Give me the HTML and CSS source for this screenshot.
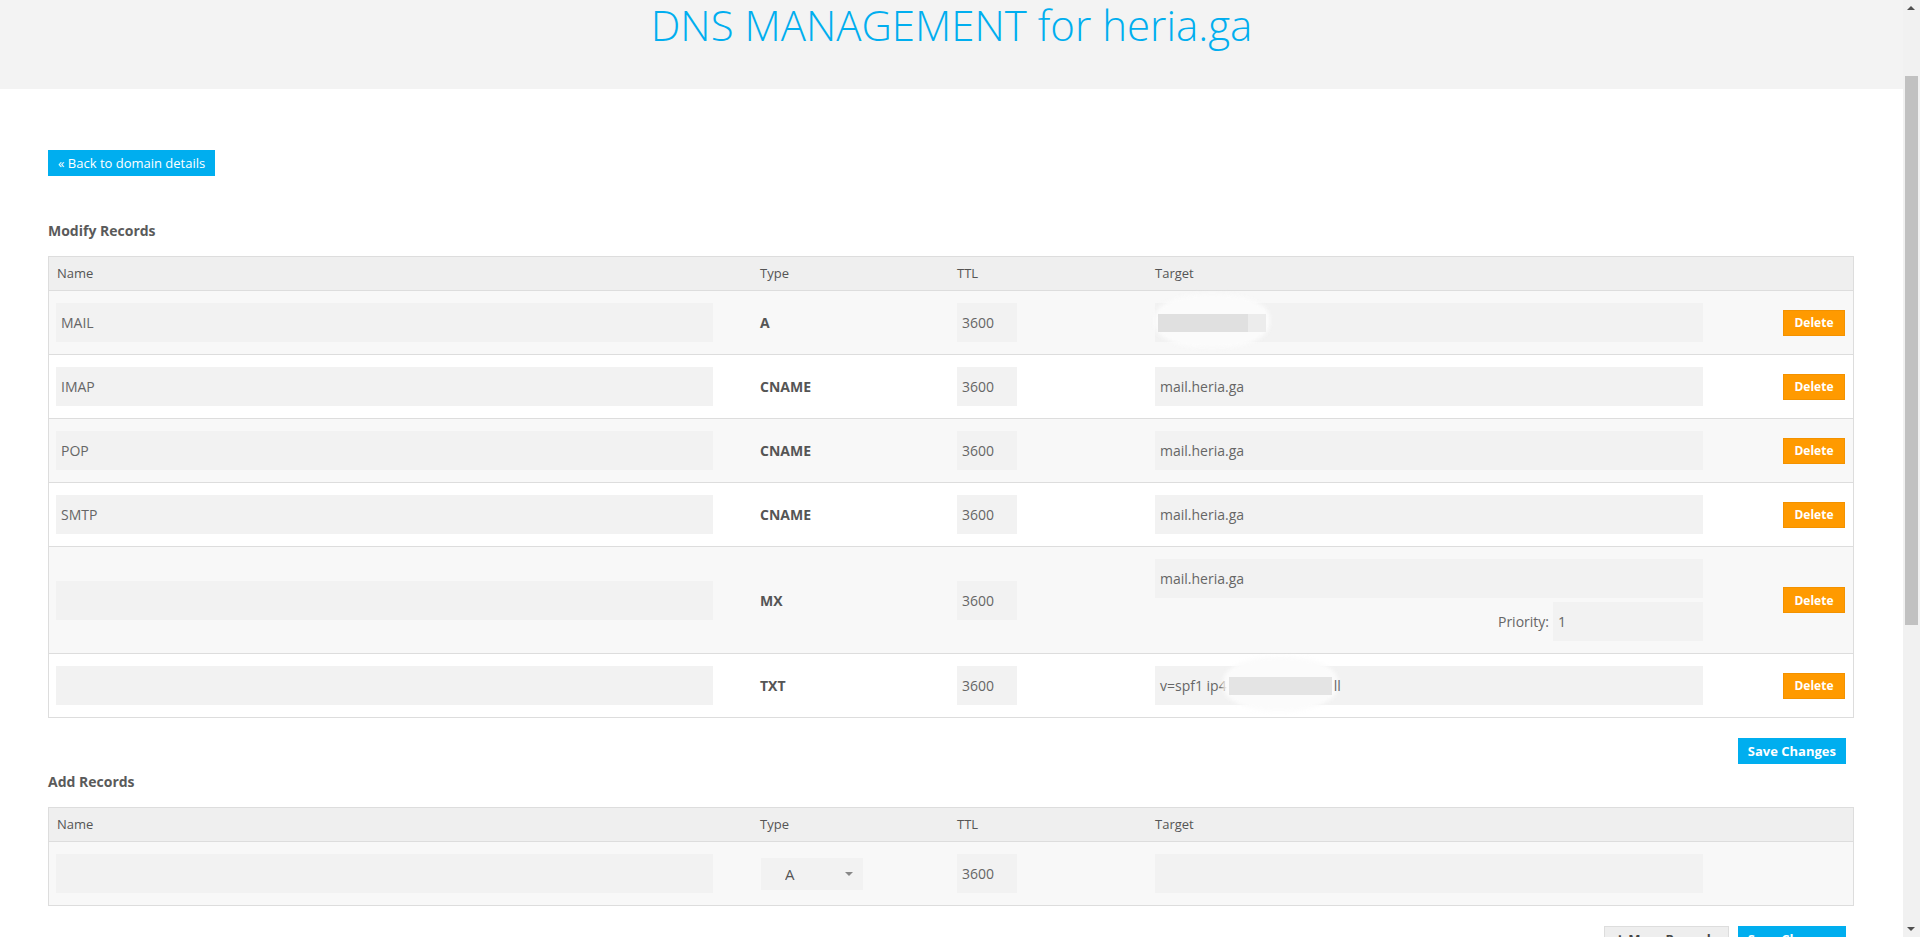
FILE: index.html
```html
<!DOCTYPE html>
<html lang="en">
<head>
<meta charset="utf-8">
<title>DNS Management</title>
<link rel="stylesheet" href="styles.css">
</head>
<body>
<div class="page">
<header class="page-head">
  <h1 class="page-title">DNS MANAGEMENT for heria.ga</h1>
</header>
<main class="content">
  <div class="back-row"><a class="btn btn-blue" href="#">&laquo; Back to domain details</a></div>

  <h2 class="section-title">Modify Records</h2>
  <div class="dns-table">
    <div class="dns-row dns-head">
      <div class="cell cell-name">Name</div>
      <div class="cell">Type</div>
      <div class="cell">TTL</div>
      <div class="cell">Target</div>
      <div class="cell"></div>
    </div>

    <div class="dns-row alt">
      <div class="cell cell-name"><input class="field f-name" value="MAIL"></div>
      <div class="cell type">A</div>
      <div class="cell"><input class="field f-ttl" value="3600"></div>
      <div class="cell"><div class="field f-target"><span class="smudge smudge-ip"><span class="smudge-bar"></span><span class="smudge-tail"></span></span></div></div>
      <div class="cell action"><button class="btn btn-orange">Delete</button></div>
    </div>

    <div class="dns-row">
      <div class="cell cell-name"><input class="field f-name" value="IMAP"></div>
      <div class="cell type">CNAME</div>
      <div class="cell"><input class="field f-ttl" value="3600"></div>
      <div class="cell"><input class="field f-target" value="mail.heria.ga"></div>
      <div class="cell action"><button class="btn btn-orange">Delete</button></div>
    </div>

    <div class="dns-row alt">
      <div class="cell cell-name"><input class="field f-name" value="POP"></div>
      <div class="cell type">CNAME</div>
      <div class="cell"><input class="field f-ttl" value="3600"></div>
      <div class="cell"><input class="field f-target" value="mail.heria.ga"></div>
      <div class="cell action"><button class="btn btn-orange">Delete</button></div>
    </div>

    <div class="dns-row">
      <div class="cell cell-name"><input class="field f-name" value="SMTP"></div>
      <div class="cell type">CNAME</div>
      <div class="cell"><input class="field f-ttl" value="3600"></div>
      <div class="cell"><input class="field f-target" value="mail.heria.ga"></div>
      <div class="cell action"><button class="btn btn-orange">Delete</button></div>
    </div>

    <div class="dns-row alt">
      <div class="cell cell-name"><input class="field f-name" value=""></div>
      <div class="cell type">MX</div>
      <div class="cell"><input class="field f-ttl" value="3600"></div>
      <div class="cell target-stack">
        <input class="field f-target" value="mail.heria.ga">
        <div class="priority-row"><label class="priority-label">Priority:</label><input class="field f-priority" value="1"></div>
      </div>
      <div class="cell action"><button class="btn btn-orange">Delete</button></div>
    </div>

    <div class="dns-row">
      <div class="cell cell-name"><input class="field f-name" value=""></div>
      <div class="cell type">TXT</div>
      <div class="cell"><input class="field f-ttl" value="3600"></div>
      <div class="cell"><div class="field f-target">v=spf1 ip4<span class="smudge smudge-txt"><span class="smudge-bar"></span></span><span class="after-smudge">ll</span></div></div>
      <div class="cell action"><button class="btn btn-orange">Delete</button></div>
    </div>
  </div>

  <div class="button-row save-row"><button class="btn btn-blue btn-bold">Save Changes</button></div>

  <h2 class="section-title">Add Records</h2>
  <div class="dns-table">
    <div class="dns-row dns-head">
      <div class="cell cell-name">Name</div>
      <div class="cell">Type</div>
      <div class="cell">TTL</div>
      <div class="cell">Target</div>
      <div class="cell"></div>
    </div>
    <div class="dns-row alt">
      <div class="cell cell-name"><input class="field f-name" value=""></div>
      <div class="cell"><div class="select-wrap"><select class="type-select"><option>A</option><option>AAAA</option><option>CNAME</option><option>MX</option><option>TXT</option></select></div></div>
      <div class="cell"><input class="field f-ttl" value="3600"></div>
      <div class="cell"><input class="field f-target" value=""></div>
      <div class="cell"></div>
    </div>
  </div>

  <div class="button-row bottom-row">
    <button class="btn btn-gray"><span class="plus">+</span> More Records</button>
    <button class="btn btn-blue btn-bold">Save Changes</button>
  </div>
</main>
</div>
<div class="scrollbar" aria-hidden="true">
  <span class="sb-arrow sb-up"></span>
  <span class="sb-thumb"></span>
  <span class="sb-arrow sb-down"></span>
</div>
</body>
</html>
```

FILE: styles.css
```css
html, body {
  margin: 0;
  padding: 0;
}
body {
  font-family: "Open Sans", "Liberation Sans", sans-serif;
  color: #555;
  background: #fff;
  font-size: 14px;
}
.page {
  margin-right: 17px;
}
.page-head {
  background: #f3f3f3;
  height: 89px;
}
.page-title {
  margin: 0;
  text-align: center;
  font-weight: 300;
  font-size: 42px;
  line-height: 50px;
  color: #00aeef;
}
.content {
  padding: 61px 49px 500px 48px;
}
.back-row {
  display: flex;
}
.btn {
  font-family: "Open Sans", "Liberation Sans", sans-serif;
  border: 0;
  text-decoration: none;
  display: inline-flex;
  align-items: center;
  justify-content: center;
  height: 26px;
  box-sizing: border-box;
  cursor: pointer;
}
.btn-blue {
  background: #00aeef;
  color: #fff;
  font-size: 13px;
  padding: 0 10px;
}
.btn-bold {
  font-weight: 700;
  font-size: 13px;
  padding: 0 10px;
}
.btn-orange {
  background: #ff9a00;
  border: 1px solid #f39200;
  color: #fff;
  font-weight: 700;
  font-size: 12px;
  width: 62px;
  padding: 0;
}
.btn-gray {
  background: #eee;
  border: 1px solid #ddd;
  color: #444;
  font-weight: 700;
  font-size: 13px;
  width: 125px;
  gap: 4px;
}
.plus {
  font-weight: 800;
  font-size: 15px;
}
.section-title {
  margin: 45px 0 15px;
  font-size: 14px;
  line-height: 20px;
  font-weight: 700;
  color: #5a5a5a;
}
.dns-table {
  border: 1px solid #ddd;
}
.dns-row {
  display: grid;
  grid-template-columns: 703px 197px 198px 606px 1fr;
  align-items: center;
  padding: 12px 0;
  border-top: 1px solid #ddd;
  background: #fff;
}
.dns-row.alt {
  background: #f8f8f8;
}
.dns-row.dns-head {
  border-top: 0;
  background: #efefef;
  padding: 8px 0;
  font-size: 13px;
  line-height: 17px;
  color: #555;
}
.cell {
  padding: 0 8px;
  min-width: 0;
}
.cell-name {
  padding-left: 7px;
}
.dns-head .cell-name {
  padding-left: 8px;
}
.type {
  font-weight: 700;
  font-size: 14px;
  color: #555;
}
.action {
  display: flex;
  justify-content: flex-end;
}
.field {
  box-sizing: border-box;
  height: 39px;
  border: 0;
  outline: 0;
  background: #f2f2f2;
  padding: 0 5px;
  font-family: "Open Sans", "Liberation Sans", sans-serif;
  font-size: 14px;
  color: #666;
  display: flex;
  align-items: center;
  white-space: nowrap;
}
.f-name { width: 657px; }
.f-ttl { width: 60px; }
.f-target { width: 548px; }
.f-priority { width: 150px; }
.target-stack {
  display: flex;
  flex-direction: column;
  gap: 4px;
}
.priority-row {
  display: flex;
  align-items: center;
  justify-content: flex-end;
  width: 548px;
  gap: 4px;
}
.priority-label {
  font-size: 14px;
  color: #666;
}
.smudge {
  position: relative;
  display: inline-block;
  height: 18px;
}
.smudge::before {
  content: "";
  position: absolute;
  left: -4px;
  right: -4px;
  top: -20px;
  bottom: -16px;
  background: #fbfbfb;
  border-radius: 45%;
  filter: blur(2px);
}
.smudge-bar {
  position: absolute;
  left: 0;
  top: 0;
  height: 18px;
  background: #e0e0e0;
}
.smudge-ip {
  width: 108px;
  margin-left: -2px;
}
.smudge-ip .smudge-bar {
  width: 90px;
}
.smudge-tail {
  position: absolute;
  left: 90px;
  top: 0;
  width: 18px;
  height: 18px;
  background: #ececec;
}
.smudge-txt {
  width: 107px;
}
.smudge-txt .smudge-bar {
  left: 2px;
  width: 103px;
  background: #e4e4e4;
}
.after-smudge {
  position: relative;
}
.select-wrap {
  position: relative;
  width: 102px;
  margin-left: 1px;
}
.type-select {
  appearance: none;
  -webkit-appearance: none;
  width: 102px;
  height: 32px;
  border: 0;
  outline: 0;
  background: #f2f2f2;
  font-family: "Open Sans", "Liberation Sans", sans-serif;
  font-size: 15px;
  color: #555;
  padding: 0 0 0 24px;
}
.select-wrap::after {
  content: "";
  position: absolute;
  right: 10px;
  top: 14px;
  border-left: 4px solid transparent;
  border-right: 4px solid transparent;
  border-top: 4px solid #888;
}
.button-row {
  display: flex;
  justify-content: flex-end;
  gap: 9px;
  padding-right: 8px;
}
.save-row {
  margin-top: 20px;
}
.save-row + .section-title {
  margin-top: 8px;
}
.bottom-row {
  margin-top: 20px;
}
.scrollbar {
  position: fixed;
  top: 0;
  right: 0;
  width: 17px;
  height: 100vh;
  background: #f1f1f1;
}
.sb-thumb {
  position: absolute;
  left: 2px;
  right: 2px;
  top: 76px;
  height: 549px;
  background: #c1c1c1;
}
.sb-arrow {
  position: absolute;
  left: 4px;
  border-left: 4px solid transparent;
  border-right: 4px solid transparent;
}
.sb-up {
  top: 6px;
  border-bottom: 4px solid #505050;
}
.sb-down {
  bottom: 6px;
  border-top: 4px solid #505050;
}
```
